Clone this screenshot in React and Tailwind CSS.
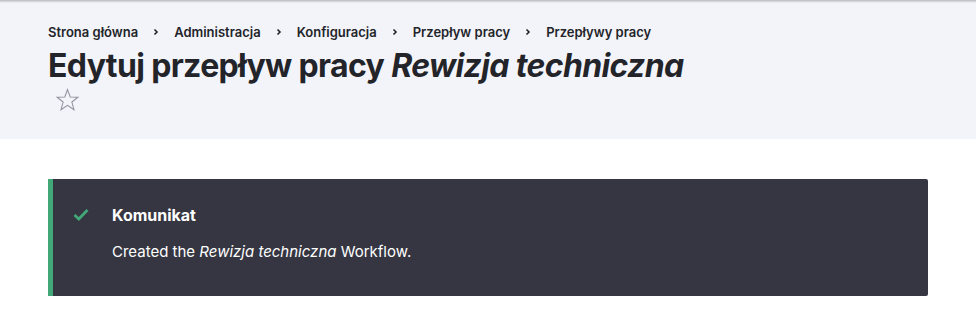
export default function App() {
  const crumbs = ["Strona główna", "Administracja", "Konfiguracja", "Przepływ pracy", "Przepływy pracy"];
  return (
    <div className="w-[976px] h-[312px] bg-white overflow-hidden" style={{ fontFamily: "Inter, 'Noto Sans', sans-serif" }}>
      <div className="relative h-[139px] bg-[#f3f4f9] pl-12 pt-[23px]">
        <div className="absolute top-0 left-0 right-0 h-[3px] bg-gradient-to-b from-[#b9bac0] to-[#f3f4f9]" />
        <nav className="flex items-center text-[13px] leading-[18px] font-semibold text-[#232429]">
          {crumbs.map((c, i) => (
            <span key={c} className="flex items-center">
              {i > 0 && (
                <svg width="8" height="8" viewBox="0 0 8 8" className="mx-[14px]">
                  <path d="M2.5 1.5 L5 4 L2.5 6.5" fill="none" stroke="#232429" strokeWidth="1.6" />
                </svg>
              )}
              {c}
            </span>
          ))}
        </nav>
        <h1 className="mt-[5px] text-[32px] leading-[40px] font-bold text-[#232429] tracking-[-0.02em]">
          Edytuj przepływ pracy <em className="italic">Rewizja techniczna</em>
        </h1>
        <div className="mt-[2px] ml-[7px]">
          <svg width="25" height="25" viewBox="0 0 24 24">
            <path d="M12 1.5 L14.6 8.6 L22 8.9 L16.2 13.5 L18.2 20.8 L12 16.6 L5.8 20.8 L7.8 13.5 L2 8.9 L9.4 8.6 Z" fill="none" stroke="#8e929c" strokeWidth="1" strokeLinejoin="miter" />
          </svg>
        </div>
      </div>
      <div className="pt-[40px] px-12">
        <div className="flex h-[117px] w-[880px] bg-[#353641] rounded-r-[2px] border-l-[5px] border-[#42a877] pl-[20px] pt-[26px]">
          <svg width="16" height="14" viewBox="0 0 16 14" className="mt-[3px] shrink-0">
            <path d="M1.5 7 L5.8 11 L14.5 2" fill="none" stroke="#42a877" strokeWidth="2.8" />
          </svg>
          <div className="ml-[23px] text-white">
            <div className="text-[16px] leading-[20px] font-bold">Komunikat</div>
            <div className="mt-[17px] text-[15px] leading-[20px]">
              Created the <em className="italic">Rewizja techniczna</em> Workflow.
            </div>
          </div>
        </div>
      </div>
    </div>
  );
}
